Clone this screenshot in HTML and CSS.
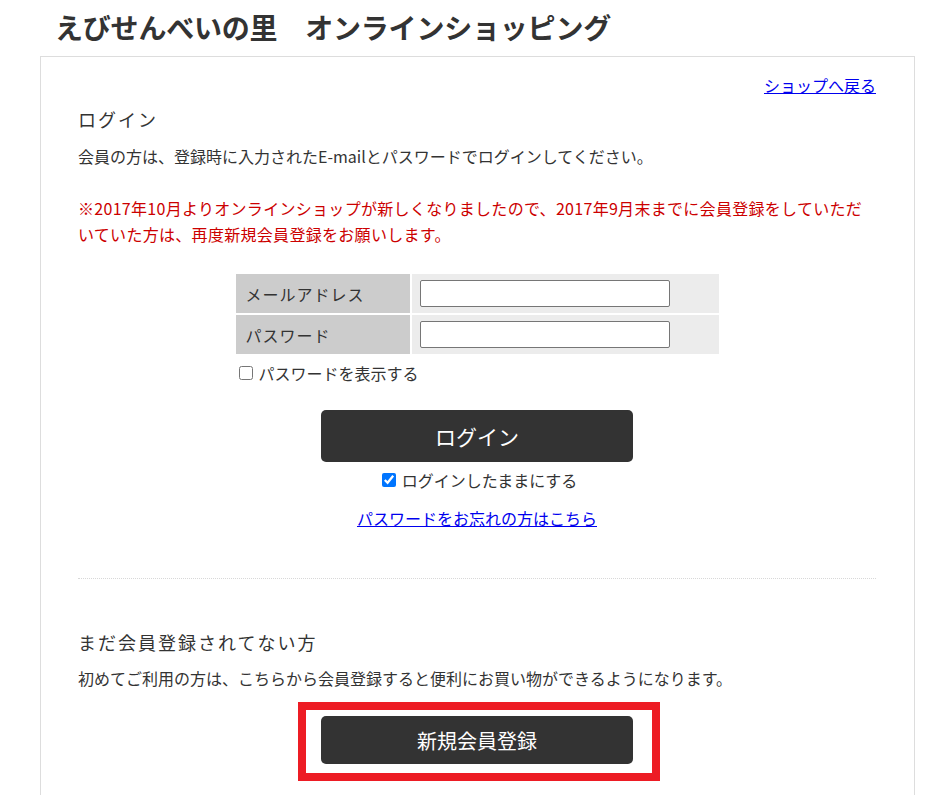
FILE: index.html
```html
<!DOCTYPE html>
<html lang="ja">
<head>
<meta charset="utf-8">
<title>ログイン | えびせんべいの里 オンラインショッピング</title>
<link rel="stylesheet" href="styles.css">
</head>
<body>
<div class="page">
  <h1 class="site-title">えびせんべいの里　オンラインショッピング</h1>
  <main class="card">
    <div class="back-row"><a href="#" class="back-link">ショップへ戻る</a></div>

    <section class="login">
      <h2 class="section-title">ログイン</h2>
      <p class="lead">会員の方は、登録時に入力されたE-mailとパスワードでログインしてください。</p>
      <p class="notice">※2017年10月よりオンラインショップが新しくなりましたので、2017年9月末までに会員登録をしていただいていた方は、再度新規会員登録をお願いします。</p>

      <form class="login-form">
        <div class="form-box">
          <table class="form-table">
            <tr>
              <th>メールアドレス</th>
              <td><input type="text" class="field"></td>
            </tr>
            <tr>
              <th>パスワード</th>
              <td><input type="password" class="field"></td>
            </tr>
          </table>
          <label class="check-row"><input type="checkbox">パスワードを表示する</label>
        </div>
        <button type="button" class="btn btn-login">ログイン</button>
        <label class="check-row center"><input type="checkbox" checked>ログインしたままにする</label>
        <div class="forgot-row"><a href="#" class="forgot-link">パスワードをお忘れの方はこちら</a></div>
      </form>
    </section>

    <hr class="divider">

    <section class="register">
      <h2 class="section-title">まだ会員登録されてない方</h2>
      <p class="lead">初めてご利用の方は、こちらから会員登録すると便利にお買い物ができるようになります。</p>
      <div class="btn-wrap">
        <div class="highlight">
          <button type="button" class="btn btn-register">新規会員登録</button>
        </div>
      </div>
    </section>
  </main>
</div>
</body>
</html>
```

FILE: styles.css
```css
html, body {
  margin: 0;
  padding: 0;
  background: #fff;
}

body {
  font-family: "Noto Sans CJK JP", "Noto Sans", sans-serif;
  color: #333;
  font-size: 16px;
  line-height: 24px;
}

.page {
  margin: 0 27px 0 40px;
}

.site-title {
  margin: 0;
  height: 56px;
  padding-left: 15px;
  font-size: 28px;
  line-height: 54px;
  font-weight: bold;
  letter-spacing: -0.2px;
  color: #333;
}

.card {
  border: 1px solid #ddd;
  padding: 16px 38px 60px 37px;
}

.back-row {
  text-align: right;
}

.back-link,
.forgot-link {
  color: #0000ee;
  text-decoration: underline;
}

.section-title {
  margin: 0;
  font-size: 18px;
  font-weight: normal;
  letter-spacing: 2px;
  line-height: 24px;
}

.login .section-title {
  margin-top: 10px;
}

.lead {
  margin: 12px 0 0;
  line-height: 26px;
}

.register .lead {
  line-height: 24px;
}

.notice {
  margin: 26px 0 0;
  color: #cc0000;
  line-height: 26px;
  letter-spacing: 0.3px;
}

.login-form {
  display: flex;
  flex-direction: column;
  align-items: center;
}

.form-box {
  margin-top: 25px;
  width: 487px;
}

.form-table {
  border-collapse: separate;
  border-spacing: 2px;
  width: 487px;
}

.form-table th {
  width: 174px;
  height: 39px;
  padding: 0 0 0 10px;
  box-sizing: border-box;
  background: #ccc;
  text-align: left;
  font-weight: normal;
  letter-spacing: 1px;
  color: #333;
}

.form-table td {
  height: 39px;
  padding: 0 0 0 8px;
  background: #ececec;
}

.field {
  display: block;
  width: 250px;
  height: 27px;
  box-sizing: border-box;
  border: 1px solid #767676;
  border-radius: 2px;
  padding: 1px 4px;
  background: #fff;
  font: inherit;
}

.check-row {
  display: flex;
  align-items: center;
  margin-top: 5px;
  line-height: 24px;
  color: #333;
}

.check-row input {
  margin: 0 6px 0 5px;
  width: 14px;
  height: 14px;
}

.check-row.center {
  justify-content: center;
  margin-top: 6px;
}

.btn {
  display: flex;
  align-items: center;
  justify-content: center;
  width: 312px;
  border: none;
  border-radius: 5px;
  background: #333;
  color: #fff;
  font-family: inherit;
  cursor: pointer;
}

.btn-login {
  margin-top: 25px;
  height: 52px;
  font-size: 21px;
}

.forgot-row {
  margin-top: 14px;
  text-align: center;
}

.divider {
  margin: 48px 0 0;
  border: none;
  border-top: 1px dotted #d8d8d8;
  height: 0;
}

.register .section-title {
  margin-top: 51px;
}

.btn-wrap {
  display: flex;
  justify-content: center;
  margin-top: 26px;
}

.highlight {
  position: relative;
}

.highlight::after {
  content: "";
  position: absolute;
  left: -23px;
  top: -14px;
  width: 362px;
  height: 79px;
  box-sizing: border-box;
  border: 8px solid #ed1c24;
  pointer-events: none;
}

.btn-register {
  height: 48px;
  font-size: 20px;
}
```
